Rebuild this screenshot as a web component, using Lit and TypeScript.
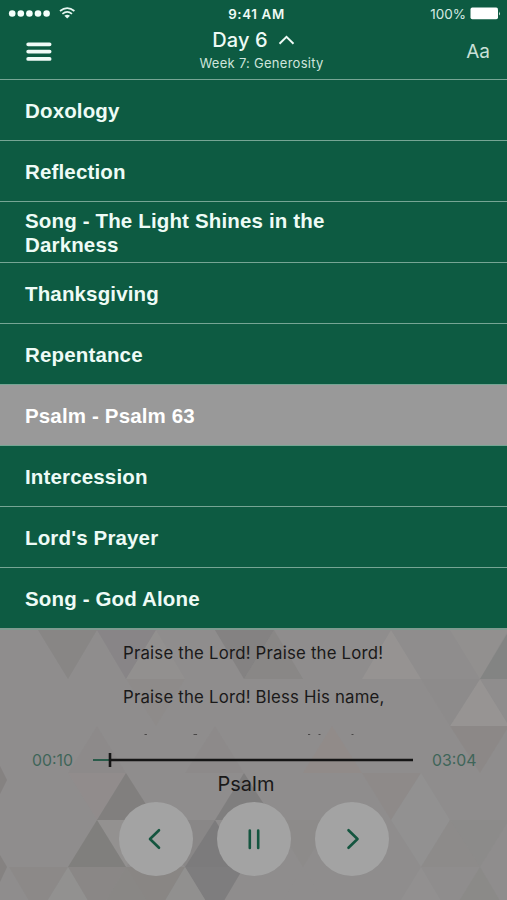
import { LitElement, html, css, svg } from "lit";
import { customElement, property } from "lit/decorators.js";
import { classMap } from "lit/directives/class-map.js";

const ITEMS = [
  "Doxology",
  "Reflection",
  "Song - The Light Shines in the Darkness",
  "Thanksgiving",
  "Repentance",
  "Psalm - Psalm 63",
  "Intercession",
  "Lord's Prayer",
  "Song - God Alone",
];

/* Triangles of the mosaic: vertices in panel coordinates, fill, opacity. */
const TRIANGLES: [string, string, number][] = [
  ["38,0 97,0 68,49", "#858382", 0.7],
  ["97,0 156,0 126,49", "#858284", 0.7],
  ["126,49 185,49 156,0", "#959392", 0.5],
  ["215,0 274,0 244,49", "#7f7d7e", 0.7],
  ["244,49 303,49 274,0", "#868483", 0.7],
  ["362,49 421,49 391,0", "#979594", 0.8],
  ["450,0 507,0 507,2 480,49", "#949291", 0.6],
  ["480,49 507,4 507,49", "#828382", 0.9],
  ["480,49 450,96 509,96", "#989695", 0.8],
  ["450,96 509,96 480,143", "#8a8583", 0.6],
  ["421,49 480,49 450,96", "#8c8a8a", 0.5],
  ["126,49 185,49 156,96", "#8c8a88", 0.4],
  ["97,96 68,143 126,143", "#8a8888", 0.4],
  ["215,96 185,143 244,143", "#898788", 0.4],
  ["332,96 303,143 362,143", "#938985", 0.5],
  ["362,143 421,143 391,190", "#8e8885", 0.5],
  ["68,143 126,143 97,190", "#938d8b", 0.4],
  ["126,143 97,190 156,190", "#7f7c7b", 0.85],
  ["97,190 156,190 126,237", "#949291", 0.8],
  ["97,190 68,237 126,237", "#7e7c7a", 0.85],
  ["244,143 215,190 274,190", "#7d7b7b", 0.85],
  ["156,190 215,190 185,237", "#868484", 0.7],
  ["215,190 185,237 244,237", "#797879", 0.85],
  ["185,237 244,237 215,286", "#7b7a7b", 0.85],
  ["126,237 185,237 156,286", "#868380", 0.7],
  ["97,286 126,237 156,286", "#868481", 0.7],
  ["68,237 126,237 97,286", "#888583", 0.7],
  ["68,237 38,286 97,286", "#939391", 0.7],
  ["185,237 156,286 215,286", "#919190", 0.8],
  ["9,237 68,237 38,286", "#8a8786", 0.6],
  ["421,143 391,190 450,190", "#929292", 0.8],
  ["391,190 450,190 421,237", "#929292", 0.8],
  ["274,190 332,190 303,237", "#8b8988", 0.5],
  ["303,237 274,286 332,286", "#8f8d8d", 0.6],
  ["421,237 391,286 450,286", "#939292", 0.7],
  ["450,190 509,190 480,237", "#8b8a88", 0.6],
  ["421,237 450,190 480,237", "#8b8988", 0.5],
  ["450,286 480,237 509,286", "#898886", 0.6],
  ["0,136 7,150 0,164", "#827f7e", 0.8],
  ["0,225 7,237 0,252", "#827f7e", 0.8],
];

@customElement("status-bar")
class StatusBar extends LitElement {
  static styles = css`
    :host { display: grid; grid-template-columns: 1fr auto 1fr; align-items: center; height: 27px; padding: 0 6px 0 8px; box-sizing: border-box; color: #eefaf5; font-size: 13.5px; }
    .left, .right { display: flex; align-items: center; }
    .right { justify-content: flex-end; gap: 4px; color: #d5eae2; }
    .time { font-weight: 600; font-size: 13.3px; letter-spacing: 0.65px; padding-left: 4px; }
    svg { display: block; }
  `;
  render() {
    return html`
      <div class="left">
        <svg width="70" height="16" viewBox="0 0 70 16">
          ${[0, 1, 2, 3, 4].map((i) => svg`<circle cx=${4.2 + i * 8.6} cy="7.5" r="3.3" fill="#f4fffb" />`)}
          <g fill="none" stroke="#e6f6f0" stroke-width="1.7">
            <path d="M52 5Q59.2 -.9 66.4 5" />
            <path d="M54.4 7.9Q59.2 4 64 7.9" />
          </g>
          <path d="M56.4 9.7Q59.2 7.9 62 9.7L59.2 12.5z" fill="#e6f6f0" />
        </svg>
      </div>
      <div class="time">9:41 AM</div>
      <div class="right">
        <span>100%</span>
        <svg width="31" height="13" viewBox="0 0 31 13">
          <rect x="0.5" y="0.6" width="27.5" height="11.7" rx="1.8" fill="#fff" />
          <path d="M29 4.6q1.8 2 0 4z" fill="#d5eae2" />
        </svg>
      </div>
    `;
  }
}

@customElement("player-panel")
class PlayerPanel extends LitElement {
  static styles = css`
    :host { display: block; position: relative; flex: 1; overflow: hidden; background: #8f8d8d; color: #1a1919; }
    .mosaic { position: absolute; inset: 0; width: 100%; height: 100%; }
    .content { position: relative; display: flex; flex-direction: column; align-items: center; }
    .lyrics { width: 261px; height: 106px; overflow: hidden; font-size: 16.8px; letter-spacing: 0.2px; line-height: 44px; white-space: nowrap; padding-top: 1px; box-sizing: border-box; }
    .line { display: flex; }
    .progress { display: grid; grid-template-columns: 41px 320px 44px; column-gap: 19.5px; align-items: center; height: 48px; padding-left: 1px; color: #3f6559; font-size: 15.8px; }
    .title { font-size: 20px; line-height: 24px; margin-top: -12px; margin-right: 15px; }
    .controls { display: flex; gap: 24px; margin-top: 6px; }
    .button { display: flex; width: 74px; height: 74px; border-radius: 50%; background: #a3a3a3; }
    svg { display: block; }
  `;
  render() {
    const icons = ["M40 28.2L31 37L40 45.8", "M32.8 28.5V46M41.2 28.5V46", "M33.5 28.2L42.5 37L33.5 45.8"];
    return html`
      <svg class="mosaic" viewBox="0 0 507 270" preserveAspectRatio="xMinYMin slice">
        ${TRIANGLES.map(([p, f, o]) => svg`<polygon points=${p} fill=${f} opacity=${o} />`)}
      </svg>
      <div class="content">
        <div class="lyrics">
          <div class="line">Praise the Lord! Praise the Lord!</div>
          <div class="line">Praise the Lord! Bless His name,</div>
          <svg width="261" height="17" viewBox="0 0 261 17">
            <path d="M21.5 15.5h2.4M70.5 15.5h3.6M185 15.5h2.2M195.5 15.5h2M228.5 15.5h2" stroke="#4a4848" stroke-width="1" />
          </svg>
        </div>
        <div class="progress">
          <span>00:10</span>
          <svg width="320" height="16" viewBox="0 0 320 16">
            <path d="M0 8H17" stroke="#2a5b4a" stroke-width="2" />
            <path d="M17 8H320" stroke="#151515" stroke-width="2.4" />
            <path d="M17 1V15" stroke="#151515" stroke-width="2.6" />
          </svg>
          <span>03:04</span>
        </div>
        <div class="title">Psalm</div>
        <div class="controls">
          ${icons.map((d) => html`<div class="button"><svg width="74" height="74" viewBox="0 0 74 74"><path d=${d} fill="none" stroke="#14553f" stroke-width="2.6" stroke-linecap="round" stroke-linejoin="round" /></svg></div>`)}
        </div>
      </div>
    `;
  }
}

@customElement("app-root")
class AppRoot extends LitElement {
  @property() selected = "Psalm - Psalm 63";
  static styles = css`
    :host { display: flex; flex-direction: column; height: 900px; overflow: hidden; background: #0d5b42; font-family: Inter, "Liberation Sans", sans-serif; }
    header { display: grid; grid-template-columns: 1fr auto 1fr; height: 52px; padding: 0 17px; color: #eefaf5; }
    .menu { margin: 15px 0 0 9px; }
    .heading { display: flex; flex-direction: column; align-items: center; }
    .day { display: flex; align-items: center; gap: 10px; height: 26px; font-size: 20px; font-weight: 500; letter-spacing: 0.1px; }
    .week { padding-left: 16px; font-size: 13px; letter-spacing: 0.27px; line-height: 20px; color: #cfe5dc; }
    .size { justify-self: end; margin-top: 14px; font-size: 19px; line-height: 22px; color: #c9e0d7; }
    .list { display: flex; flex-direction: column; }
    .item { display: flex; align-items: center; height: 61px; box-sizing: border-box; border-top: 1px solid #76a594; padding: 1px 150px 0 25px; font: bold 20.5px/24px "Liberation Sans", sans-serif; letter-spacing: 0.15px; color: #eefbf6; }
    .item.active { background: #999; color: #fff; }
    player-panel { border-top: 2px solid #7f9a90; }
    svg { display: block; }
  `;
  render() {
    return html`
      <status-bar></status-bar>
      <header>
        <svg class="menu" width="26" height="20" viewBox="0 0 26 20">
          <path d="M2.2 2.3H23.6M2.2 9.6H23.6M2.2 16.9H23.6" stroke="#f0fbf7" stroke-width="3.8" stroke-linecap="round" />
        </svg>
        <div class="heading">
          <div class="day"><span>Day 6</span>
            <svg width="17" height="10" viewBox="0 0 17 10"><path d="M1.5 8.7L8.5 1.8L15.5 8.7" fill="none" stroke="#eefaf5" stroke-width="2" /></svg>
          </div>
          <div class="week">Week 7: Generosity</div>
        </div>
        <div class="size">Aa</div>
      </header>
      <div class="list">
        ${ITEMS.map((t) => html`<div class=${classMap({ item: true, active: t === this.selected })}>${t}</div>`)}
      </div>
      <player-panel></player-panel>
    `;
  }
}
